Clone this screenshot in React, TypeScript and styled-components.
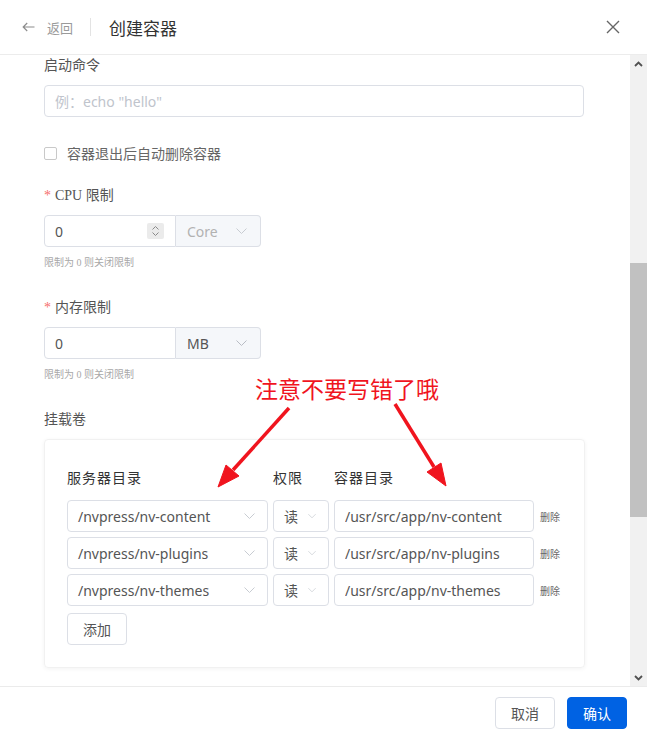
import React from "react";
import styled, { createGlobalStyle } from "styled-components";

const GlobalStyle = createGlobalStyle`
  html, body { margin: 0; padding: 0; background: #fff; }
  body { font-family: "Noto Sans", "Noto Sans CJK SC", sans-serif; color: #333; }
  * { box-sizing: border-box; }
`;

const Page = styled.div`
  position: relative;
  width: 647px;
  height: 749px;
  display: flex;
  flex-direction: column;
  overflow: hidden;
  background: #fff;
`;

const Header = styled.header`
  flex: none;
  height: 55px;
  border-bottom: 1px solid #ececec;
  display: flex;
  align-items: center;
  padding-left: 22px;
`;

const BackLink = styled.div`
  display: flex;
  align-items: center;
  gap: 12px;
  font-size: 13px;
  color: #9a9a9a;
`;

const HeaderDivider = styled.span`
  width: 1px;
  height: 18px;
  background: #e3e3e3;
  margin: 0 18px 0 17px;
`;

const Title = styled.h1`
  margin: 0;
  font-size: 17px;
  font-weight: 400;
  color: #333;
`;

const CloseButton = styled.div`
  margin-left: auto;
  margin-right: 27px;
  display: flex;
  align-items: center;
`;

const Body = styled.div`
  flex: 1;
  display: flex;
  min-height: 0;
`;

const Content = styled.div`
  flex: 1;
  overflow: hidden;
  padding: 0 45px 0 44px;
`;

const ScrollRail = styled.div`
  flex: none;
  width: 17px;
  background: #f1f1f1;
  display: flex;
  flex-direction: column;
`;

const RailButton = styled.div`
  height: 17px;
  display: flex;
  align-items: center;
  justify-content: center;
`;

const RailTrack = styled.div`
  flex: 1;
  display: flex;
  flex-direction: column;
`;

const RailThumb = styled.div`
  margin-top: 191px;
  height: 254px;
  background: #c1c1c1;
`;

const FormItem = styled.div<{ $mb?: number }>`
  margin-bottom: ${(p) => (p.$mb ?? 24)}px;
`;

const Label = styled.div`
  font-family: "Liberation Serif", "Noto Sans CJK SC", serif;
  font-size: 14px;
  line-height: 22px;
  color: #555;
  margin-bottom: 8px;
`;

const Required = styled.span`
  color: #f56c6c;
  margin-right: 4px;
`;

const Hint = styled.div`
  font-family: "Liberation Serif", "Noto Sans CJK SC", serif;
  font-size: 10px;
  line-height: 16px;
  margin-top: 8px;
  color: #a8a8a8;
`;

const TextInput = styled.input<{ $width?: number }>`
  display: block;
  width: ${(p) => (p.$width ? `${p.$width}px` : "100%")};
  height: 32px;
  border: 1px solid #dcdfe6;
  border-radius: 4px;
  padding: 0 10px;
  font-family: "Noto Sans", "Noto Sans CJK SC", sans-serif;
  font-size: 14px;
  color: #555;
  outline: none;
  background: #fff;
  &::placeholder { color: #c0c4cc; }
`;

const CheckRow = styled.label`
  display: flex;
  align-items: center;
  gap: 10px;
  height: 22px;
  margin: 25px 0 21px;
  font-size: 14px;
  color: #666;
`;

const CheckBox = styled.span`
  width: 13px;
  height: 13px;
  border: 1px solid #c9c9c9;
  border-radius: 2px;
  background: #fff;
`;

const Group = styled.div`
  display: flex;
  width: 217px;
  height: 32px;
`;

const NumberBox = styled.div`
  width: 132px;
  height: 32px;
  display: flex;
  align-items: center;
  border: 1px solid #dcdfe6;
  border-radius: 4px 0 0 4px;
  padding: 0 11px 0 10px;
  font-size: 14px;
  color: #555;
`;

const NumberValue = styled.span`
  flex: 1;
`;

const Stepper = styled.span`
  width: 17px;
  height: 16px;
  border-radius: 2px;
  background: #ebebeb;
  display: flex;
  flex-direction: column;
  align-items: center;
  justify-content: center;
  gap: 2px;
`;

const UnitSelect = styled.div<{ $disabled?: boolean }>`
  flex: 1;
  height: 32px;
  display: flex;
  align-items: center;
  justify-content: space-between;
  padding: 0 13px 0 11px;
  background: #f5f7fa;
  border: 1px solid #dcdfe6;
  border-left: none;
  border-radius: 0 4px 4px 0;
  font-size: 14px;
  color: ${(p) => (p.$disabled ? "#b2b2b2" : "#555")};
`;

const Card = styled.div`
  border: 1px solid #f1f1f1;
  border-radius: 4px;
  box-shadow: 0 1px 4px rgba(0, 0, 0, 0.05);
  padding: 27px 0 22px 22px;
`;

const VolumeGrid = styled.div`
  display: grid;
  grid-template-columns: 201px 56px 200px auto;
  column-gap: 5px;
  row-gap: 5px;
  align-items: center;
`;

const ColHead = styled.div`
  font-size: 14px;
  line-height: 22px;
  letter-spacing: 1px;
  color: #333;
  margin-bottom: 6px;
`;

const Select = styled.div<{ $padL?: number; $padR?: number; $gap?: number }>`
  height: 32px;
  display: flex;
  align-items: center;
  justify-content: ${(p) => (p.$gap ? "flex-start" : "space-between")};
  gap: ${(p) => p.$gap ?? 0}px;
  padding: 0 ${(p) => p.$padR ?? 12}px 0 ${(p) => p.$padL ?? 10}px;
  border: 1px solid #dcdfe6;
  border-radius: 4px;
  font-size: 14px;
  color: #555;
  background: #fff;
  white-space: nowrap;
`;

const DeleteLink = styled.span`
  font-size: 10px;
  color: #666;
  margin-left: 1px;
`;

const PlainButton = styled.button<{ $primary?: boolean }>`
  width: 60px;
  height: 32px;
  border-radius: 4px;
  border: 1px solid ${(p) => (p.$primary ? "#0062e3" : "#dcdfe6")};
  background: ${(p) => (p.$primary ? "#0062e3" : "#fff")};
  color: ${(p) => (p.$primary ? "#fff" : "#555")};
  font-family: "Noto Sans", "Noto Sans CJK SC", sans-serif;
  font-size: 14px;
  padding: 0;
  cursor: pointer;
`;

const AddButton = styled(PlainButton)`
  display: block;
  margin-top: 7px;
`;

const Footer = styled.footer`
  flex: none;
  height: 63px;
  border-top: 1px solid #ebebeb;
  display: flex;
  justify-content: flex-end;
  align-items: flex-start;
  gap: 12px;
  padding: 10px 20px 0 0;
`;

const Overlay = styled.svg`
  position: absolute;
  left: 0;
  top: 0;
  pointer-events: none;
`;

const Annotation = styled.div`
  position: absolute;
  left: 255px;
  top: 374px;
  font-family: "Noto Sans CJK SC", sans-serif;
  font-size: 23px;
  line-height: 28px;
  font-weight: 400;
  color: #f0141e;
  white-space: nowrap;
  pointer-events: none;
`;

const Chevron = ({ color = "#c0c4cc" }: { color?: string }) => (
  <svg width="11" height="6" viewBox="0 0 11 6">
    <path d="M0.5 0.5 L5.5 5.5 L10.5 0.5" stroke={color} strokeWidth="1" fill="none" />
  </svg>
);

const TinyChevron = ({ up }: { up?: boolean }) => (
  <svg width="7" height="4" viewBox="0 0 7 4">
    <path d={up ? "M0.5 3.5 L3.5 0.5 L6.5 3.5" : "M0.5 0.5 L3.5 3.5 L6.5 0.5"} stroke="#8a8a8a" strokeWidth="1" fill="none" />
  </svg>
);

const RailArrow = ({ up }: { up?: boolean }) => (
  <svg width="9" height="6" viewBox="0 0 9 6">
    <path d={up ? "M1 5 L4.5 1.5 L8 5" : "M1 1 L4.5 4.5 L8 1"} stroke="#505050" strokeWidth="1.8" fill="none" />
  </svg>
);

const volumes = [
  { host: "/nvpress/nv-content", mode: "读", target: "/usr/src/app/nv-content" },
  { host: "/nvpress/nv-plugins", mode: "读", target: "/usr/src/app/nv-plugins" },
  { host: "/nvpress/nv-themes", mode: "读", target: "/usr/src/app/nv-themes" },
];

export default function App() {
  return (
    <Page>
      <GlobalStyle />
      <Header>
        <BackLink>
          <svg width="13" height="10" viewBox="0 0 13 10">
            <path d="M12.5 5 H1.2 M5.2 1 L1.2 5 L5.2 9" stroke="#8c8c8c" strokeWidth="1.2" fill="none" />
          </svg>
          返回
        </BackLink>
        <HeaderDivider />
        <Title>创建容器</Title>
        <CloseButton>
          <svg width="14" height="14" viewBox="0 0 14 14">
            <path d="M1 1 L13 13 M13 1 L1 13" stroke="#666" strokeWidth="1.4" />
          </svg>
        </CloseButton>
      </Header>

      <Body>
        <Content>
          <FormItem $mb={0}>
            <Label>启动命令</Label>
            <TextInput readOnly placeholder='例：echo "hello"' $width={540} />
          </FormItem>

          <CheckRow>
            <CheckBox />
            容器退出后自动删除容器
          </CheckRow>

          <FormItem $mb={26}>
            <Label>
              <Required>*</Required>CPU 限制
            </Label>
            <Group>
              <NumberBox>
                <NumberValue>0</NumberValue>
                <Stepper>
                  <TinyChevron up />
                  <TinyChevron />
                </Stepper>
              </NumberBox>
              <UnitSelect $disabled>
                Core
                <Chevron color="#c8ccd2" />
              </UnitSelect>
            </Group>
            <Hint>限制为 0 则关闭限制</Hint>
          </FormItem>

          <FormItem $mb={26}>
            <Label>
              <Required>*</Required>内存限制
            </Label>
            <Group>
              <NumberBox>
                <NumberValue>0</NumberValue>
              </NumberBox>
              <UnitSelect>
                MB
                <Chevron color="#b8bcc4" />
              </UnitSelect>
            </Group>
            <Hint>限制为 0 则关闭限制</Hint>
          </FormItem>

          <FormItem>
            <Label>挂载卷</Label>
            <Card>
              <VolumeGrid>
                <ColHead>服务器目录</ColHead>
                <ColHead>权限</ColHead>
                <ColHead>容器目录</ColHead>
                <span />
                {volumes.map((v) => (
                  <React.Fragment key={v.host}>
                    <Select>
                      {v.host}
                      <Chevron color="#c8ccd2" />
                    </Select>
                    <Select $padL={10} $gap={10}>
                      {v.mode}
                      <Chevron color="#c8ccd2" />
                    </Select>
                    <TextInput readOnly value={v.target} />
                    <DeleteLink>删除</DeleteLink>
                  </React.Fragment>
                ))}
              </VolumeGrid>
              <AddButton>添加</AddButton>
            </Card>
          </FormItem>
        </Content>

        <ScrollRail>
          <RailButton>
            <RailArrow up />
          </RailButton>
          <RailTrack>
            <RailThumb />
          </RailTrack>
          <RailButton>
            <RailArrow />
          </RailButton>
        </ScrollRail>
      </Body>

      <Footer>
        <PlainButton>取消</PlainButton>
        <PlainButton $primary>确认</PlainButton>
      </Footer>

      <Annotation>注意不要写错了哦</Annotation>
      <Overlay width="647" height="749" viewBox="0 0 647 749">
        <g fill="#f0141e" stroke="#f0141e">
          <line x1="289" y1="408" x2="233" y2="470" strokeWidth="3.5" />
          <polygon points="218,487 239,476 226,465" strokeWidth="1" />
          <line x1="395" y1="404" x2="434" y2="467" strokeWidth="3.5" />
          <polygon points="446,486 427,472 441,463" strokeWidth="1" />
        </g>
      </Overlay>
    </Page>
  );
}
